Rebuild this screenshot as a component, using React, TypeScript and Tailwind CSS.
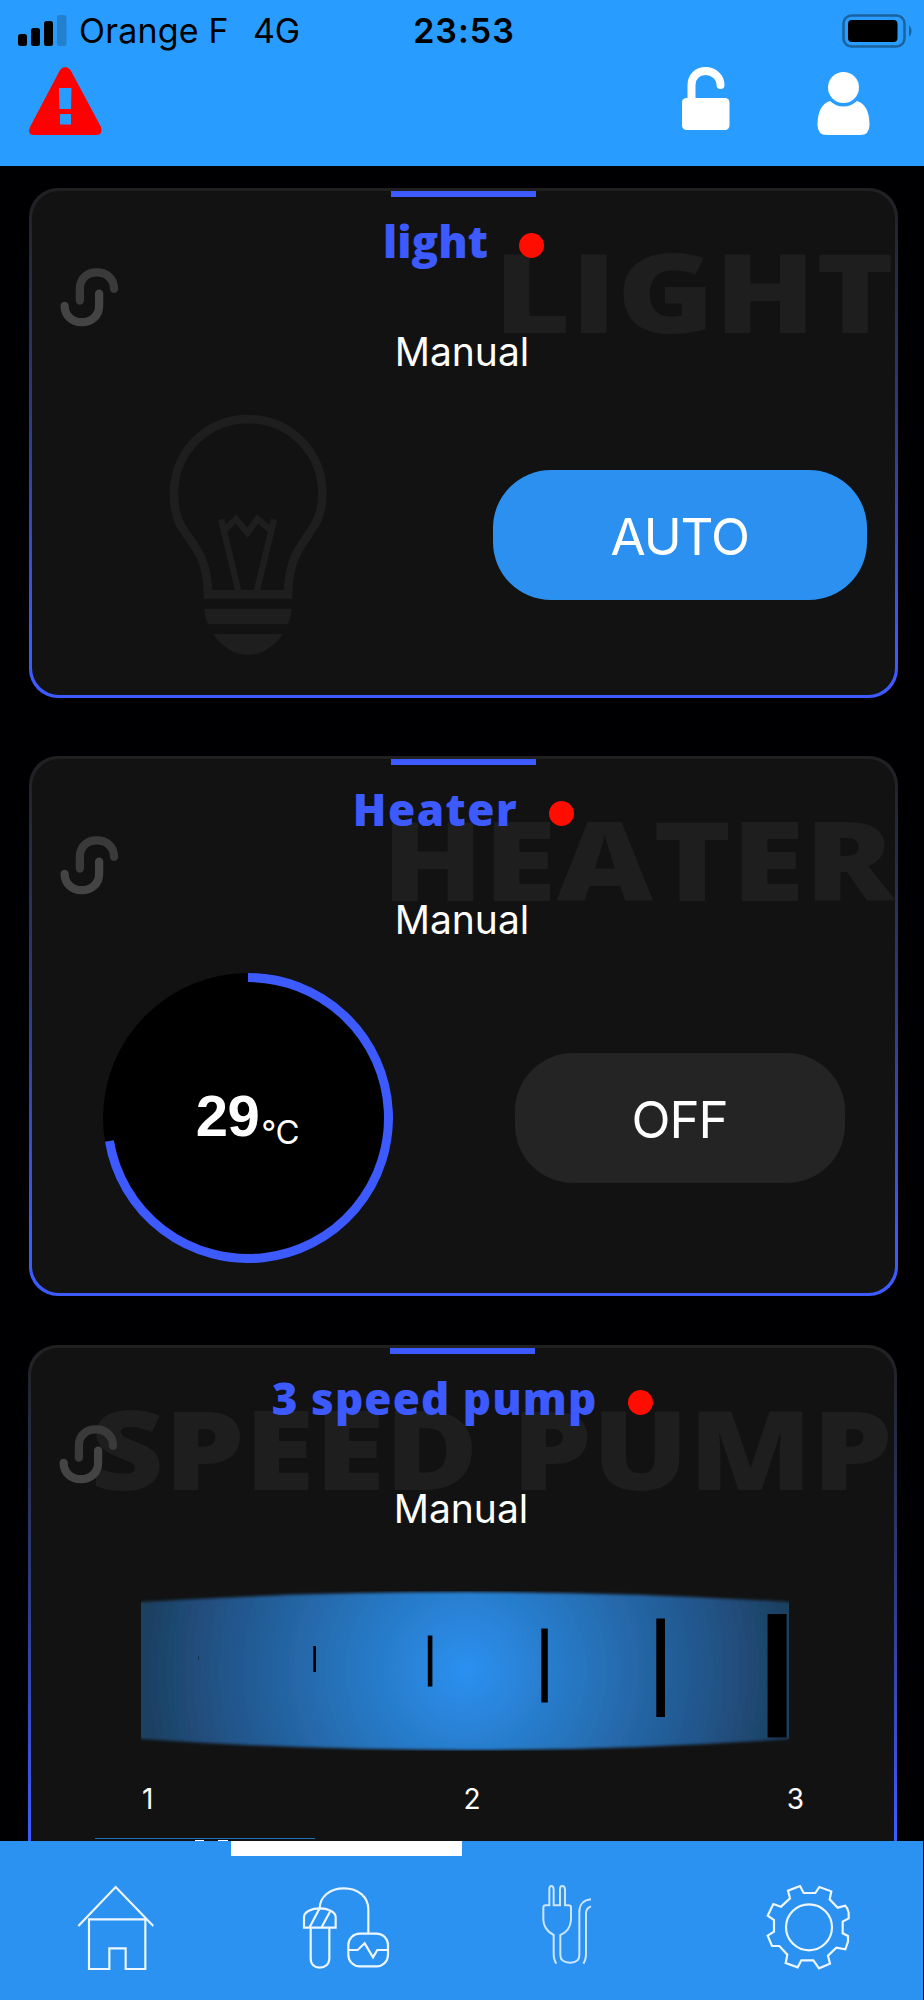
import type { ReactNode } from "react";

interface DeviceCardProps {
  title: string;
  watermark: string;
  titleClassName?: string;
  watermarkClassName?: string;
  className?: string;
  children?: ReactNode;
}

function LinkIcon() {
  return (
    <svg viewBox="180 262 178 180" className="absolute left-[31px] top-[79px] h-[60px] w-[59px]" fill="none" strokeWidth="25" strokeLinecap="round">
      <path d="M240 363V326C240 297 262 278 291 278S343 297 343 327" stroke="#3a3a3a" />
      <path d="M194 379C194 408 217 428 246 428S298 408 298 379V342" stroke="#444" />
    </svg>
  );
}

function DeviceCard({ title, watermark, titleClassName = "", watermarkClassName = "", className = "", children }: DeviceCardProps) {
  return (
    <section className={`relative shrink-0 rounded-[29px] bg-linear-to-b from-[#202020] via-[#2e3a80] via-45% to-[#3d5afe] to-90% p-[3px] ${className}`}>
      <div className="flex h-full flex-col items-center overflow-hidden rounded-[27px] bg-[#121212]">
        <span
          className={`absolute right-[4px] top-[47px] origin-right whitespace-nowrap font-['Open_Sans',sans-serif] text-[110px] font-extrabold leading-[110px] text-[#1e1e1e] ${watermarkClassName}`}
        >
          {watermark}
        </span>
        <LinkIcon />
        <div className="h-[6px] w-[145px] shrink-0 bg-[#3d5afe]" />
        <div className="relative mt-[22px] flex items-center gap-[31px]">
          <h2 className={`whitespace-nowrap font-['Open_Sans',sans-serif] text-[44px] font-extrabold leading-[44px] text-[#3d5afe] ${titleClassName}`}>
            {title}
          </h2>
          <span className="mt-[9px] size-[25px] rounded-full bg-[#ff0d00]" />
        </div>
        <p className="relative mt-[69px] pr-[3px] text-[39px] leading-[40px] text-white">Manual</p>
        {children}
      </div>
    </section>
  );
}

function BulbIcon() {
  return (
    <svg viewBox="500 40 490 730" className="h-[243px] w-[163px]" fill="none" stroke="#1e1e1e" strokeWidth="26">
      <path d="M623 585C623 470 578 440 541 377C529 355 521 324 521 283C521 157 619 58 744 58S967 157 967 283C967 324 959 350 946 373C910 433 864 470 864 585Z" />
      <path d="M663 360L715 578M822 360L769 578M675 390L707 358L742 400L772 358L809 390" strokeWidth="19" />
      <path d="M612 628H874Q873 655 863 675H624Q613 655 612 628ZM639 704H848C822 743 785 767 743 767S666 743 639 704Z" fill="#1e1e1e" stroke="none" />
    </svg>
  );
}

function TemperatureDial({ value }: { value: number }) {
  return (
    <div className="relative flex size-[290px] items-center justify-center rounded-full bg-black">
      <svg viewBox="0 0 290 290" className="absolute inset-0" fill="none">
        <path d="M145 4.5A140.500 140.500 0 1 1 6.400 168" stroke="#3d5afe" strokeWidth="9" />
      </svg>
      <div className="flex items-baseline gap-[2px] pb-[4px]">
        <span className="font-['Liberation_Sans',sans-serif] text-[58px] font-bold leading-[58px] tracking-[-0.5px] text-white">{value}</span>
        <span className="relative top-[8px] text-[33px] leading-none tracking-[-0.5px] text-white">°C</span>
      </div>
    </div>
  );
}

function SpeedDial() {
  return (
    <>
      <svg viewBox="0 0 648 160" className="ml-[4px] mt-[62px] h-[160px] w-[648px] shrink-0">
        <defs>
          <radialGradient id="drum" gradientUnits="userSpaceOnUse" cx="325" cy="79" r="325">
            <stop offset="0" stopColor="#2b90f0" />
            <stop offset="0.25" stopColor="#287dcd" />
            <stop offset="0.5" stopColor="#2569ab" />
            <stop offset="0.75" stopColor="#215489" />
            <stop offset="1" stopColor="#1e3f60" />
          </radialGradient>
          <filter id="soften" x="-2%" y="-5%" width="104%" height="110%">
            <feGaussianBlur stdDeviation="0 1.500" />
          </filter>
        </defs>
        <path d="M0 11Q160 1 325 1T648 11V148Q490 159 325 159T0 148Z" fill="url(#drum)" filter="url(#soften)" />
        <path d="M57 65h1v4h-1z" fill="#173556" />
        <path d="M172.300 55h2.700v26h-2.700zM286.800 44.500h4.600v51h-4.600zM400.300 37.500h6.500v74h-6.500zM515.300 27.500h8.700v98.500h-8.700zM626.600 23h19v123.500h-19z" fill="#000" />
      </svg>
      <div className="ml-[21px] mt-[34px] flex w-[662px] justify-between text-[28px] leading-[28px] text-white">
        <span>1</span>
        <span className="pl-[4px]">2</span>
        <span>3</span>
      </div>
      {/* top edge of the next control row, cut off by the nav bar */}
      <div className="mt-[25px] flex w-full justify-start pl-[64px]">
        <div className="flex h-[4px] w-[220px] items-end border-t border-[#1c6fb8] pl-[100px]">
          <div className="h-[2px] w-[9px] bg-white" />
          <div className="ml-[14px] h-[2px] w-[10px] bg-white" />
        </div>
      </div>
    </>
  );
}

function StatusBar() {
  return (
    <div className="grid h-[61px] grid-cols-[1fr_auto_1fr] items-center pl-[18px] pr-[12px] text-[34px] leading-[40px] text-black">
      <div className="flex items-center whitespace-pre">
        <svg viewBox="0 0 49 31" className="mr-[12px] h-[31px] w-[49px]">
          <rect y="19" width="9" height="12" rx="2.500" />
          <rect x="13" y="13" width="9" height="18" rx="2.500" />
          <rect x="26" y="6" width="9" height="25" rx="2.500" />
          <rect x="39" width="9.500" height="31" rx="2.500" fill="#2280ce" />
        </svg>
        <span className="tracking-[0.2px]">Orange F</span>
        <span className="ml-[24px]">4G</span>
      </div>
      <span className="-ml-[2px] text-[34px] font-semibold tracking-[1px]">23:53</span>
      <svg viewBox="0 0 70 34" className="h-[34px] w-[70px] justify-self-end">
        <rect x="1.500" y="1.500" width="61" height="31" rx="8" fill="none" stroke="#1b629e" strokeWidth="2.500" />
        <rect x="6" y="6" width="49.500" height="22" rx="4" />
        <path d="M67 11.500Q69.500 13 69.500 17T67 22.500Z" fill="#1b629e" />
      </svg>
    </div>
  );
}

function Header() {
  return (
    <header className="h-[166px] shrink-0 bg-[#299dff]">
      <StatusBar />
      <div className="flex items-start pl-[29px] pr-[54px] pt-[6px]">
        <svg viewBox="0 0 73 68" className="h-[68px] w-[73px]" fill="#f00" fillRule="evenodd">
          <path d="M31 3Q36 -3 41.500 3L72 60Q74 68 67 68H5Q-2 68 1 60ZM30 21L30.500 42H42L42.500 21ZM31 47V57.500H42V47Z" />
        </svg>
        <svg viewBox="0 0 48 64" className="ml-auto h-[64px] w-[48px]">
          <rect y="31" width="47.500" height="32" rx="4.500" fill="#fff" />
          <path d="M9.500 34V18C9.500 9.500 15.500 4 23.500 4S38.500 10 38.500 18" fill="none" stroke="#fff" strokeWidth="8" strokeLinecap="round" />
        </svg>
        <svg viewBox="0 0 53 63" className="ml-[87px] mt-[5px] h-[63px] w-[53px]" fill="#fff">
          <circle cx="26.500" cy="15.500" r="15.500" />
          <path d="M13 29Q19 34.500 26.500 34.500T40 29Q52.500 33 52.500 53Q52.500 63 43 63H10Q.5 63 .5 53Q.5 33 13 29Z" />
        </svg>
      </div>
    </header>
  );
}

function BottomNav() {
  return (
    <nav className="relative grid h-[159px] w-[923px] shrink-0 grid-cols-4 bg-[#2b92f1]">
      <div className="absolute left-[231px] top-0 h-[15px] w-[231px] bg-white" />
      <div className="flex justify-center pt-[44px]">
        <svg viewBox="231 195 231 258" className="h-[86px] w-[77px]" fill="none" stroke="#eef7ff" strokeWidth="6.500">
          <path d="M235 318L347 201L460 318M267 298H436V447H377V385H328V447H267Z" />
        </svg>
      </div>
      <div className="flex justify-center pt-[44px]">
        <svg viewBox="906 195 264 258" className="h-[86px] w-[88px]" fill="none" stroke="#eef7ff" strokeWidth="6.500">
          <path d="M959 266C959 230 990 205 1032 205S1105 230 1105 268V340" />
          <path d="M912 323V291C912 275 935 265 959 265S1007 275 1007 291V323ZM959 265L928 323M991 273L964 323M932 323V415C932 433 943 443 959 443S988 433 988 415V323" />
          <rect x="1045" y="341" width="119" height="98" rx="34" />
          <path d="M1045 390H1073L1094 370L1119 412L1132 390H1164" />
        </svg>
      </div>
      <div className="flex justify-center pt-[44px]">
        <svg viewBox="243 195 207 258" className="h-[86px] w-[69px]" fill="none" stroke="#cde6ff" strokeWidth="6">
          <path d="M286 431Q278 420 278 400V345C257 335 247 315 247 300V263Q247 256 254 256H265V208Q265 198 271 198T278 208V256H297V208Q297 198 304 198T312 208V256H322Q330 256 330 263V300C328 325 316 338 298 345V405C298 420 308 428 328 428S355 420 355 405V275C355 252 370 240 390 238M390 259Q375 265 375 280V400Q375 420 367 431" />
        </svg>
      </div>
      <div className="flex justify-center pt-[44px]">
        <svg viewBox="912 195 252 258" className="h-[86px] w-[84px]" fill="none" stroke="#eef7ff" strokeWidth="6.500">
          <circle cx="1041" cy="322" r="69" />
          <path d="M1014 198L1025 219H1060L1072 201L1108 214L1103 238L1127 263L1150 257Q1158 265 1160 278V295L1142 305V340L1158 348V365L1150 388L1123 383L1098 407L1104 431L1071 445L1054 421H1018L1007 442L971 429L976 404L952 378H930L917 347L936 335V300L917 287L934 252L957 260L984 235L978 212Z" />
        </svg>
      </div>
    </nav>
  );
}

export default function App() {
  return (
    <div className="flex h-[2000px] w-[924px] flex-col overflow-hidden bg-[#000003] font-['Inter',sans-serif]">
      <Header />
      <main className="flex min-h-0 flex-1 flex-col overflow-hidden pl-[29px] pr-[26px] pt-[22px]">
        <DeviceCard title="light" watermark="LIGHT" watermarkClassName="scale-x-[1.202]" className="h-[510px]">
          <div className="grid w-[864px] flex-1 grid-cols-2 place-items-center pl-px pt-[2px]">
            <BulbIcon />
            <button className="h-[130px] w-[374px] rounded-[58px] bg-[#2b90ef] pt-[5px] text-[51px] tracking-[-1px] text-white">AUTO</button>
          </div>
        </DeviceCard>
        <DeviceCard title="Heater" watermark="HEATER" titleClassName="tracking-[1.5px]" watermarkClassName="scale-x-[1.208]" className="mt-[58px] h-[540px]">
          <div className="grid w-[864px] flex-1 grid-cols-2 place-items-center pt-[3px]">
            <TemperatureDial value={29} />
            <button className="h-[130px] w-[330px] rounded-[58px] bg-[#242424] pt-[5px] text-[51px] tracking-[-1px] text-white">OFF</button>
          </div>
        </DeviceCard>
        <DeviceCard title="3 speed pump" watermark="SPEED PUMP" titleClassName="tracking-[1.1px]" watermarkClassName="right-[2px] scale-x-[1.16]" className="-ml-px mr-px mt-[49px] h-[540px]">
          <SpeedDial />
        </DeviceCard>
      </main>
      <BottomNav />
    </div>
  );
}
